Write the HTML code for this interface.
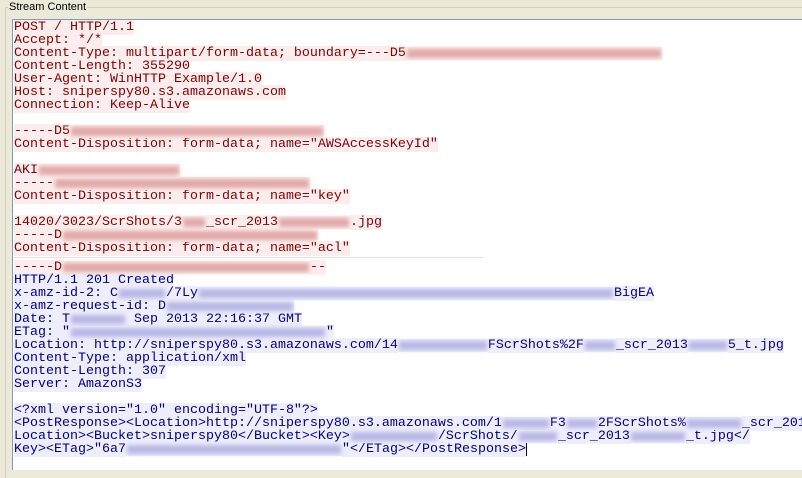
<!DOCTYPE html>
<html><head><meta charset="utf-8"><style>
html,body{margin:0;padding:0;width:802px;height:457px;overflow:hidden;background:#ECE9D8;}
.gb{position:absolute;left:5px;top:7px;width:810px;height:470px;border-top:1px solid #D0D0BF;border-left:1px solid #D0D0BF;}
.lbl{position:absolute;left:8px;top:0;padding:0 1px;background:#ECE9D8;font:11px "Liberation Sans",sans-serif;color:#000;line-height:14px;}
.ta{position:absolute;left:12px;top:19px;width:800px;height:450px;background:#fff;border-top:1px solid #7F9DB9;border-left:1px solid #7F9DB9;overflow:hidden;}
.t{position:absolute;left:1px;top:1px;font:13.33px "Liberation Mono",monospace;line-height:13px;}
.l{height:13px;white-space:pre;overflow:visible;}
.r span.x{background:#FBEDED;color:#800000;}
.s span.x{background:#EDEDFB;color:#000080;}
.b{display:inline-block;height:13px;vertical-align:top;position:relative;}
.r .b{background:#FBEDED;}
.s .b{background:#EDEDFB;}
.b::after{content:"";position:absolute;left:1px;right:1px;top:2px;bottom:2px;filter:blur(2px);}
.r .b::after{background:#E2A8A8;}
.s .b::after{background:#B8B8E6;}
.cur{display:inline-block;width:1px;height:13px;background:#000;vertical-align:top;}
</style></head><body>
<div class="gb"></div>
<div class="lbl">Stream Content</div>
<div class="ta">
<div class="t">
<div class="r">
<div class="l"><span class="x">POST / HTTP/1.1</span></div>
<div class="l"><span class="x">Accept: */*</span></div>
<div class="l"><span class="x">Content-Type: multipart/form-data; boundary=---D5</span><span class="b" style="width:256px"></span></div>
<div class="l"><span class="x">Content-Length: 355290</span></div>
<div class="l"><span class="x">User-Agent: WinHTTP Example/1.0</span></div>
<div class="l"><span class="x">Host: sniperspy80.s3.amazonaws.com</span></div>
<div class="l"><span class="x">Connection: Keep-Alive</span></div>
<div class="l"></div>
<div class="l"><span class="x">-----D5</span><span class="b" style="width:254px"></span></div>
<div class="l"><span class="x">Content-Disposition: form-data; name="AWSAccessKeyId"</span></div>
<div class="l"></div>
<div class="l"><span class="x">AKI</span><span class="b" style="width:142px"></span></div>
<div class="l"><span class="x">-----</span><span class="b" style="width:256px"></span></div>
<div class="l"><span class="x">Content-Disposition: form-data; name="key"</span></div>
<div class="l"></div>
<div class="l"><span class="x">14020/3023/ScrShots/3</span><span class="b" style="width:24px"></span><span class="x">_scr_2013</span><span class="b" style="width:72px"></span><span class="x">.jpg</span></div>
<div class="l"><span class="x">-----D</span><span class="b" style="width:256px"></span></div>
<div class="l"><span class="x">Content-Disposition: form-data; name="acl"</span></div>
<div style="height:6px;position:relative"><div style="position:absolute;left:0;top:2px;width:470px;height:1px;background:#F6DADA"></div></div>
<div class="l"><span class="x">-----D</span><span class="b" style="width:248px"></span><span class="x">--</span></div>
</div>
<div class="s">
<div class="l"><span class="x">HTTP/1.1 201 Created</span></div>
<div class="l"><span class="x">x-amz-id-2: C</span><span class="b" style="width:48px"></span><span class="x">/7Ly</span><span class="b" style="width:416px"></span><span class="x">BigEA</span></div>
<div class="l"><span class="x">x-amz-request-id: D</span><span class="b" style="width:128px"></span></div>
<div class="l"><span class="x">Date: T</span><span class="b" style="width:56px"></span><span class="x"> Sep 2013 22:16:37 GMT</span></div>
<div class="l"><span class="x">ETag: "</span><span class="b" style="width:256px"></span><span class="x">"</span></div>
<div class="l"><span class="x">Location: http://sniperspy80.s3.amazonaws.com/14</span><span class="b" style="width:90px"></span><span class="x">FScrShots%2F</span><span class="b" style="width:32px"></span><span class="x">_scr_2013</span><span class="b" style="width:40px"></span><span class="x">5_t.jpg</span></div>
<div class="l"><span class="x">Content-Type: application/xml</span></div>
<div class="l"><span class="x">Content-Length: 307</span></div>
<div class="l"><span class="x">Server: AmazonS3</span></div>
<div class="l"></div>
<div class="l"><span class="x">&lt;?xml version="1.0" encoding="UTF-8"?&gt;</span></div>
<div class="l"><span class="x">&lt;PostResponse&gt;&lt;Location&gt;http://sniperspy80.s3.amazonaws.com/1</span><span class="b" style="width:48px"></span><span class="x">F3</span><span class="b" style="width:32px"></span><span class="x">2FScrShots%</span><span class="b" style="width:56px"></span><span class="x">_scr_2013</span></div>
<div class="l"><span class="x">Location&gt;&lt;Bucket&gt;sniperspy80&lt;/Bucket&gt;&lt;Key&gt;</span><span class="b" style="width:88px"></span><span class="x">/ScrShots/</span><span class="b" style="width:40px"></span><span class="x">_scr_2013</span><span class="b" style="width:56px"></span><span class="x">_t.jpg&lt;/</span></div>
<div class="l"><span class="x">Key&gt;&lt;ETag&gt;"6a7</span><span class="b" style="width:216px"></span><span class="x">"&lt;/ETag&gt;&lt;/PostResponse&gt;</span><span class="cur"></span></div>
</div>
</div>
</div>
</body></html>
